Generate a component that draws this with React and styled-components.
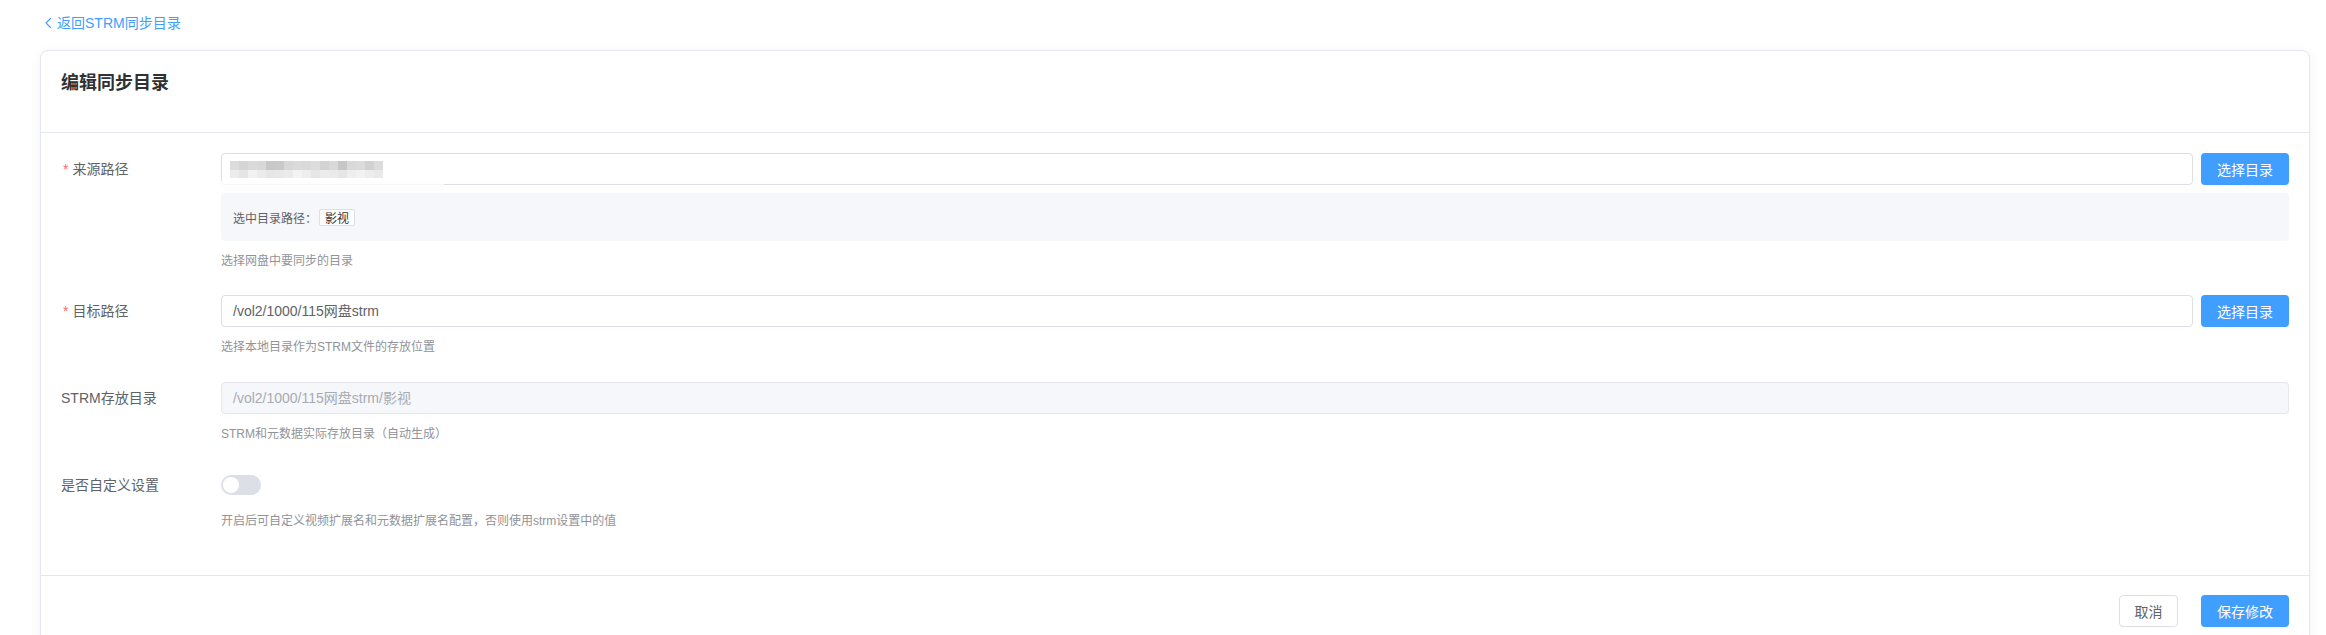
import React from "react";
import styled, { createGlobalStyle } from "styled-components";

const GlobalStyle = createGlobalStyle`
  html, body { margin: 0; padding: 0; background: #ffffff; }
  body {
    font-family: "Liberation Sans", "Noto Sans CJK SC", sans-serif;
    color: #606266;
    -webkit-font-smoothing: antialiased;
  }
  * { box-sizing: border-box; }
`;

const Page = styled.div`
  width: 2326px;
  padding: 13px 16px 0 40px;
`;

const BackLink = styled.a`
  display: inline-flex;
  align-items: center;
  height: 20px;
  margin-left: 3px;
  color: #409eff;
  font-size: 14px;
  line-height: 20px;
  text-decoration: none;
  cursor: pointer;
  svg { margin-right: 2px; }
`;

const Card = styled.div`
  margin-top: 17px;
  background: #ffffff;
  border: 1px solid #e4e7ed;
  border-radius: 8px;
  box-shadow: 0 2px 12px rgba(0, 0, 0, 0.05);
  overflow: hidden;
`;

const CardHeader = styled.div`
  height: 82px;
  padding: 20px 20px 0;
  border-bottom: 1px solid #e4e7ed;
`;

const Title = styled.h2`
  margin: 0;
  font-size: 18px;
  line-height: 24px;
  font-weight: 700;
  color: #303133;
`;

const CardBody = styled.div`
  padding: 20px 20px 20px;
  border-bottom: 1px solid #e4e7ed;
`;

const FormItem = styled.div`
  display: flex;
  margin-bottom: ${(p) => p.$gap || 25}px;
`;

const Label = styled.label`
  flex: 0 0 160px;
  height: 32px;
  line-height: 32px;
  font-size: 14px;
  color: #606266;
  padding-left: ${(p) => (p.$required ? "2px" : "0")};
`;

const Star = styled.span`
  color: #f56c6c;
  margin-right: 4px;
`;

const Content = styled.div`
  flex: 1;
  min-width: 0;
`;

const InputRow = styled.div`
  display: flex;
  gap: 8px;
  height: 32px;
  align-items: center;
`;

const InputBox = styled.div`
  position: relative;
  flex: 1;
  height: 32px;
  display: flex;
  align-items: center;
  padding: 0 11px;
  border: 1px solid ${(p) => (p.$disabled ? "#e4e7ed" : "#dcdfe6")};
  border-radius: 4px;
  background: ${(p) => (p.$disabled ? "#f5f7fa" : "#ffffff")};
  color: ${(p) => (p.$disabled ? "#a8abb2" : "#606266")};
  font-size: 14px;
  line-height: 20px;
  white-space: nowrap;
`;

const Smear = styled.div`
  position: absolute;
  left: -3px;
  bottom: -7px;
  width: 225px;
  height: 10px;
  background: linear-gradient(to bottom, rgba(255,255,255,0.85), rgba(250,250,250,0.6));
  border-radius: 0 0 10px 30px;
`;

const PrimaryButton = styled.button`
  flex: 0 0 auto;
  width: 88px;
  height: 32px;
  border: none;
  border-radius: 4px;
  background: #409eff;
  color: #ffffff;
  font-family: inherit;
  font-size: 14px;
  cursor: pointer;
`;

const PlainButton = styled.button`
  width: 59px;
  height: 32px;
  border: 1px solid #dcdfe6;
  border-radius: 4px;
  background: #ffffff;
  color: #606266;
  font-family: inherit;
  font-size: 14px;
  cursor: pointer;
`;

const SelectedBox = styled.div`
  margin-top: 8px;
  height: 48px;
  display: flex;
  align-items: center;
  padding: 0 12px;
  background: #f5f7fa;
  border-radius: 4px;
  font-size: 12px;
  color: #606266;
`;

const Tag = styled.span`
  display: inline-flex;
  align-items: center;
  height: 17px;
  padding: 0 5px;
  margin-left: 2px;
  border: 1px solid #dcdfe6;
  border-radius: 2px;
  background: #ffffff;
  color: #303133;
  font-size: 12px;
`;

const Help = styled.div`
  margin-top: 10px;
  font-size: 12px;
  line-height: 20px;
  color: #909399;
`;

const SwitchRow = styled.div`
  height: 32px;
  display: flex;
  align-items: center;
`;

const SwitchTrack = styled.span`
  position: relative;
  display: inline-block;
  width: 40px;
  height: 20px;
  border-radius: 10px;
  background: ${(p) => (p.$on ? "#409eff" : "#dcdfe6")};
  cursor: pointer;
`;

const SwitchKnob = styled.span`
  position: absolute;
  top: 2px;
  left: ${(p) => (p.$on ? "22px" : "2px")};
  width: 16px;
  height: 16px;
  border-radius: 50%;
  background: #ffffff;
`;

const CardFooter = styled.div`
  display: flex;
  justify-content: flex-end;
  gap: 23px;
  padding: 19px 20px 20px;
`;

const mosaicTop = ["#dcdcdc","#d5d5d5","#dadada","#d8d8d8","#c8c8c8","#c9c9c9","#d7d7d7","#dadada","#d9d9d9","#dddddd","#d3d3d3","#d9d9d9","#c7c7c7","#d9d9d9","#dbdbdb","#d1d1d1","#dcdcdc"];
const mosaicBottom = ["#ececec","#e5e5e5","#f1f1f1","#ebebeb","#e6e6e6","#e8e8e8","#ebebeb","#f3f3f3","#eeeeee","#e6e6e6","#ececec","#eaeaea","#e6e6e6","#eeeeee","#f2f2f2","#ededed","#e9e9e9"];

function Mosaic() {
  return (
    <svg width="153" height="17" viewBox="0 0 153 17" style={{ marginLeft: -3 }}>
      {mosaicTop.map((c, i) => (
        <rect key={"t" + i} x={i * 9} y="0" width="9" height="9" fill={c} />
      ))}
      {mosaicBottom.map((c, i) => (
        <rect key={"b" + i} x={i * 9} y="9" width="9" height="8" fill={c} />
      ))}
    </svg>
  );
}

function Chevron() {
  return (
    <svg width="12" height="12" viewBox="0 0 12 12" fill="none">
      <path d="M7.5 1.5 L3 6 L7.5 10.5" stroke="#409eff" strokeWidth="1.1" strokeLinecap="round" strokeLinejoin="round" />
    </svg>
  );
}

export default function App() {
  return (
    <>
      <GlobalStyle />
      <Page>
        <BackLink>
          <Chevron />
          返回STRM同步目录
        </BackLink>
        <Card>
          <CardHeader>
            <Title>编辑同步目录</Title>
          </CardHeader>
          <CardBody>
            <FormItem $gap={24}>
              <Label $required>
                <Star>*</Star>来源路径
              </Label>
              <Content>
                <InputRow>
                  <InputBox>
                    <Mosaic />
                    <Smear />
                  </InputBox>
                  <PrimaryButton>选择目录</PrimaryButton>
                </InputRow>
                <SelectedBox>
                  选中目录路径：<Tag>影视</Tag>
                </SelectedBox>
                <Help>选择网盘中要同步的目录</Help>
              </Content>
            </FormItem>
            <FormItem>
              <Label $required>
                <Star>*</Star>目标路径
              </Label>
              <Content>
                <InputRow>
                  <InputBox>/vol2/1000/115网盘strm</InputBox>
                  <PrimaryButton>选择目录</PrimaryButton>
                </InputRow>
                <Help>选择本地目录作为STRM文件的存放位置</Help>
              </Content>
            </FormItem>
            <FormItem>
              <Label>STRM存放目录</Label>
              <Content>
                <InputRow>
                  <InputBox $disabled>/vol2/1000/115网盘strm/影视</InputBox>
                </InputRow>
                <Help>STRM和元数据实际存放目录（自动生成）</Help>
              </Content>
            </FormItem>
            <FormItem $gap={24}>
              <Label>是否自定义设置</Label>
              <Content>
                <SwitchRow>
                  <SwitchTrack>
                    <SwitchKnob />
                  </SwitchTrack>
                </SwitchRow>
                <Help>开启后可自定义视频扩展名和元数据扩展名配置，否则使用strm设置中的值</Help>
              </Content>
            </FormItem>
          </CardBody>
          <CardFooter>
            <PlainButton>取消</PlainButton>
            <PrimaryButton>保存修改</PrimaryButton>
          </CardFooter>
        </Card>
      </Page>
    </>
  );
}
